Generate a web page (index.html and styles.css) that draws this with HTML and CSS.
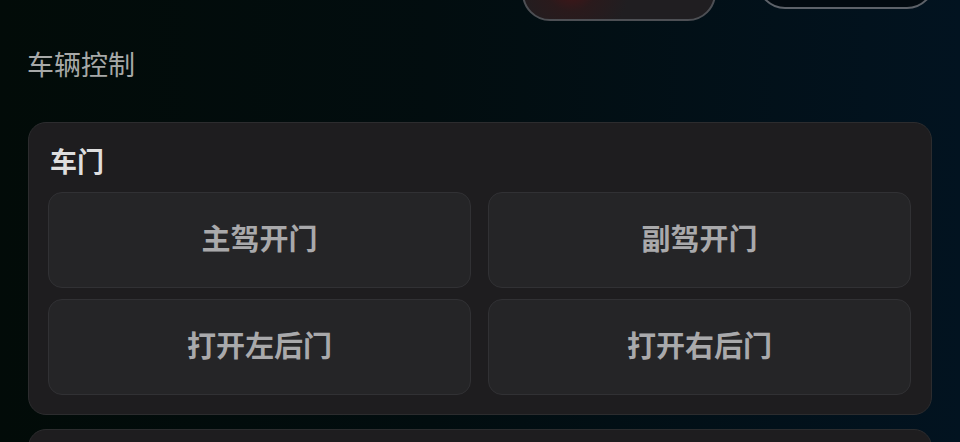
FILE: index.html
```html
<!DOCTYPE html>
<html lang="zh">
  <head>
    <meta charset="utf-8" />
    <meta name="viewport" content="width=device-width, initial-scale=1.0" />
    <title>车辆控制</title>
    <link rel="stylesheet" href="styles.css">
  </head>

  <body>
    <!-- ______TOP KNAPPER______ -->
    <header class="top">
      <button class="pill pill-red"></button>
      <button class="pill pill-line"></button>
    </header>

    <main>
      <h1 class="titel">车辆控制</h1>

      <section class="kort">
        <h2>车门</h2>
        <div class="knapper">
          <button class="knap">主驾开门</button>
          <button class="knap">副驾开门</button>
          <button class="knap">打开左后门</button>
          <button class="knap">打开右后门</button>
        </div>
      </section>

      <section class="kort kort-næste"></section>
    </main>
  </body>
</html>
```

FILE: styles.css
```css
html,
body {
  margin: 0;
  height: 100%;
  overflow: hidden;
}

body {
  font-family: "Noto Sans CJK SC", "Noto Sans", sans-serif;
  background: linear-gradient(90deg, #020b08 0%, #020d0f 45%, #021320 100%);
  padding: 0 28px 0 28px;
  box-sizing: border-box;
}

/*_____TOP_____*/

.top {
  display: flex;
  justify-content: flex-end;
  align-items: flex-start;
  gap: 41px;
  height: 21px;
  margin-right: -3px;
}

.pill {
  height: 56px;
  border-radius: 28px;
  padding: 0;
  flex-shrink: 0;
}

.pill-red {
  width: 194px;
  margin-top: -35px;
  border: 2px solid #4d4f54;
  background: radial-gradient(circle at 25% 35%, #4a1416 0%, #2a1a1c 18%, #201e21 40%);
}

.pill-line {
  width: 178px;
  margin-top: -47px;
  border: 2px solid #5d6269;
  background-color: #020a10;
}

/*_____INDHOLD_____*/

.titel {
  margin: 27px 0 0 -1px;
  font-size: 27px;
  line-height: 32px;
  font-weight: normal;
  color: #a7a9a8;
}

.kort {
  margin-top: 42px;
  background-color: #1e1d1f;
  border: 1px solid #2c2c2e;
  border-radius: 18px;
  padding: 22px 20px 19px 19px;
}

.kort h2 {
  margin: 0 0 15px 2px;
  font-size: 27px;
  line-height: 32px;
  font-weight: bold;
  color: #dedede;
}

.knapper {
  display: grid;
  grid-template-columns: 1fr 1fr;
  gap: 11px 17px;
}

.knap {
  height: 96px;
  padding: 0 0 6px;
  background-color: #252527;
  border: 1px solid #313134;
  border-radius: 14px;
  font-family: inherit;
  font-size: 29px;
  font-weight: bold;
  color: #a9a9ab;
  cursor: pointer;
}

.kort-næste {
  margin-top: 14px;
  height: 60px;
  padding: 0;
}
```
